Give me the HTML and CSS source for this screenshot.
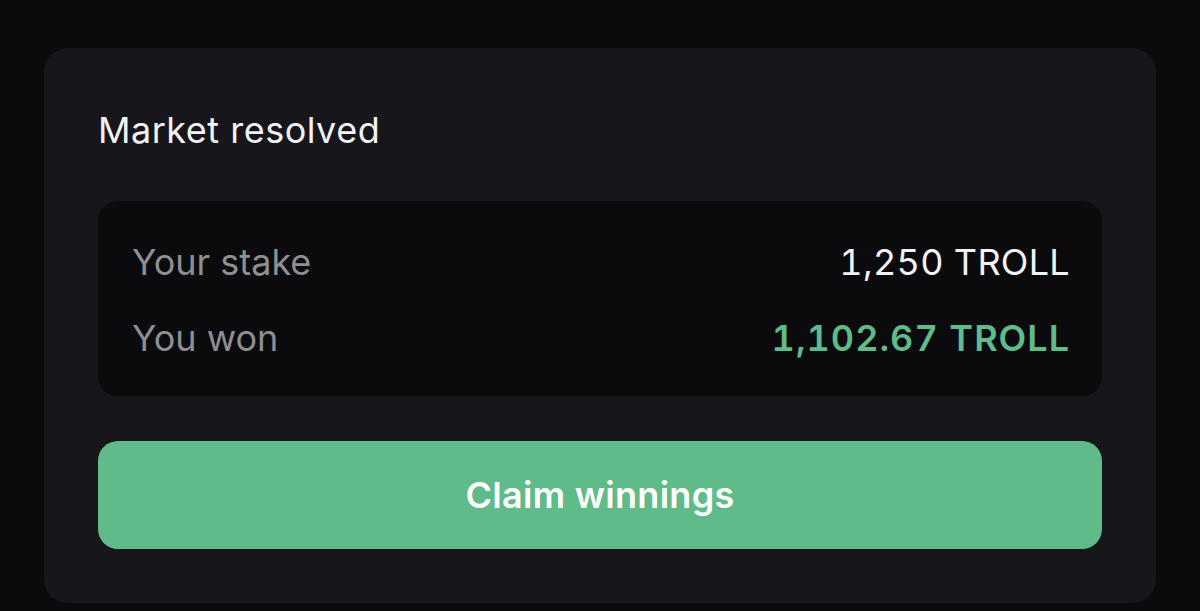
FILE: index.html
```html
<!DOCTYPE html>
<html>
<head>
<meta charset="utf-8">
<link rel="stylesheet" href="styles.css">
</head>
<body>
<div class="page">
  <section class="card">
    <h2 class="title">Market resolved</h2>
    <div class="summary">
      <div class="row">
        <span class="label">Your stake</span>
        <span class="value">1,250 TROLL</span>
      </div>
      <div class="row">
        <span class="label">You won</span>
        <span class="value win">1,102.67 TROLL</span>
      </div>
    </div>
    <button class="claim">Claim winnings</button>
  </section>
</div>
</body>
</html>
```

FILE: styles.css
```css
* { box-sizing: border-box; }
html, body {
  margin: 0;
  background: #0b0b0d;
  font-family: Inter, "Noto Sans", sans-serif;
}
.page {
  padding: 48px 44px 0 44px;
  height: 611px;
  overflow: hidden;
}
.card {
  background: #16161b;
  border-radius: 24px;
  padding: 62px 54px 54px 54px;
  display: flex;
  flex-direction: column;
}
.title {
  margin: 0;
  font-size: 36px;
  line-height: 40px;
  font-weight: 400;
  letter-spacing: 0.5px;
  color: #f2f2f7;
}
.summary {
  margin-top: 51px;
  background: #0b0b0d;
  border-radius: 20px;
  padding: 41px 32px 38px 34px;
  display: flex;
  flex-direction: column;
  gap: 36px;
}
.row {
  display: flex;
  justify-content: space-between;
  align-items: center;
  font-size: 36px;
  line-height: 40px;
}
.label { color: #8e8e93; }
.value {
  color: #f2f2f7;
  font-feature-settings: "tnum" 1;
  letter-spacing: 0.3px;
}
.value.win {
  color: #5fbb8a;
  font-weight: 600;
  letter-spacing: 1px;
}
.claim {
  margin-top: 45px;
  height: 108px;
  border: none;
  border-radius: 20px;
  background: #5fbb8a;
  color: #ffffff;
  font-family: inherit;
  font-size: 36px;
  font-weight: 600;
  letter-spacing: 0.3px;
}
```
